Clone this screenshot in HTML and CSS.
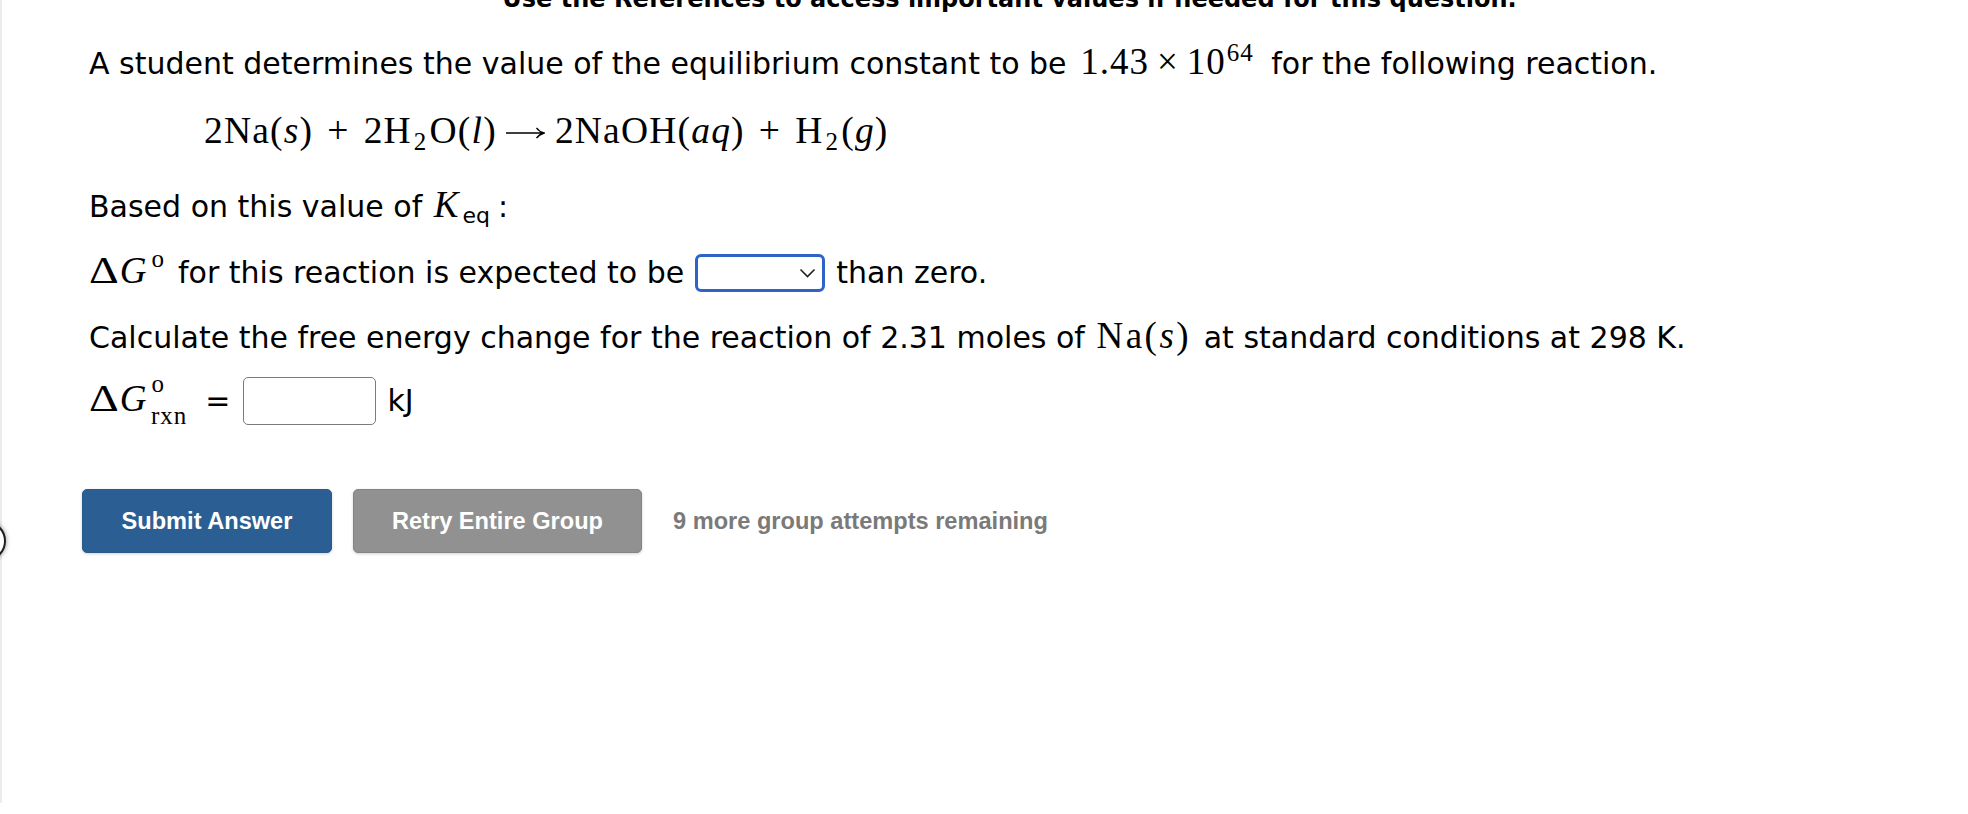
FILE: index.html
```html
<!DOCTYPE html>
<html lang="en">
<head>
<meta charset="utf-8">
<title>Equilibrium constant question</title>
<link rel="stylesheet" href="styles.css">
</head>
<body>
<div class="edge-knob"></div>
<div class="page">
  <div class="refs">Use the References to access important values if needed for this question.</div>
  <div class="question">
    <p class="line l1">A student determines the value of the equilibrium constant to be <span class="m m-k">1.43<span class="times">×</span>10<span class="sup sup-exp">64</span></span> for the following reaction.</p>
    <div class="eq">2Na(<i>s</i>)<span class="bin">+</span>2H<span class="sub sub-eq">2</span>O(<i>l</i>)<svg class="arrow" width="40" height="14" viewBox="0 0 40 14"><path d="M1 7H38.5M31.5 1.8Q34 5.6 39.2 7Q34 8.4 31.5 12.2" fill="none" stroke="#000" stroke-width="1.3"/></svg>2NaOH(<i>aq</i>)<span class="bin">+</span>H<span class="sub sub-eq">2</span>(<i>g</i>)</div>
    <p class="line l2">Based on this value of <span class="m"><i class="k">K</i><span class="sub sub-keq">eq</span></span><span class="colon">:</span></p>
    <div class="row l3">
      <span class="txt"><span class="m m-dg"><span class="delta">Δ</span><i>G</i><span class="sup sup-deg">o</span></span>for this reaction is expected to be</span>
      <div class="select">
        <svg class="chev" width="17" height="10" viewBox="0 0 17 10"><polyline points="1.5,1.5 8.5,8.5 15.5,1.5" fill="none" stroke="#222" stroke-width="1.6"/></svg>
      </div>
      <span class="txt">than zero.</span>
    </div>
    <p class="line l4">Calculate the free energy change for the reaction of 2.31 moles of <span class="m m-na">Na(<i>s</i>)</span> at standard conditions at 298 K.</p>
    <div class="row l5">
      <span class="txt"><span class="m"><span class="delta">Δ</span><i>G</i><span class="sup sup-rxn">o</span><span class="sub sub-rxn">rxn</span></span></span>
      <span class="txt eqsign">=</span>
      <div class="input"></div>
      <span class="txt unit">kJ</span>
    </div>
    <div class="actions">
      <button class="btn btn-primary">Submit Answer</button>
      <button class="btn btn-secondary">Retry Entire Group</button>
      <span class="remaining">9 more group attempts remaining</span>
    </div>
  </div>
</div>
</body>
</html>
```
FILE: styles.css
```css
html, body {
  margin: 0;
  padding: 0;
  background: #ffffff;
}
body {
  font-family: "DejaVu Sans", Verdana, sans-serif;
  color: #000000;
  overflow: hidden;
  height: 814px;
}
.page {
  border-left: 2px solid #ececec;
  height: 814px;
  box-sizing: border-box;
}
.refs {
  font-weight: bold;
  font-size: 24px;
  line-height: 20px;
  margin-top: -11px;
  text-align: center;
  padding-left: 49px;
  white-space: nowrap;
}
.question {
  padding-left: 87px;
}
.line {
  margin: 0;
  font-size: 30px;
  line-height: 40px;
  white-space: nowrap;
}
.m {
  font-family: "Liberation Serif", "Times New Roman", serif;
  font-size: 37px;
  line-height: 0;
  letter-spacing: 1px;
}
.m i, .eq i {
  font-style: italic;
}
.m-k {
  margin-left: 4px;
  margin-right: 8px;
}
.m-dg {
  margin-right: 13px;
}
.m-na {
  letter-spacing: 2.5px;
  margin-left: 2px;
  margin-right: 3px;
}
.delta {
  display: inline-block;
  transform: scaleX(1.25);
  transform-origin: left center;
  margin-right: 6px;
}
.sup, .sub {
  line-height: 0;
  font-size: 25px;
}
.sup-exp { vertical-align: 13px; margin-left: 1px; }
.sup-deg { vertical-align: 16px; margin-left: 4px; }
.sup-rxn { vertical-align: 19px; margin-left: 4px; }
.sub-rxn { vertical-align: -13px; margin-left: -14px; }
.sub-eq { vertical-align: -7px; margin-left: 2px; margin-right: 2px; }
.sub-keq {
  font-family: "DejaVu Sans", Verdana, sans-serif;
  font-size: 22px;
  letter-spacing: 0;
  vertical-align: -6px;
  margin-left: 3px;
}
.k { margin-left: 2px; }
.colon { margin-left: 8px; }
.times { margin: 0 8px; }
.l1 { margin-top: 35px; }
.eq {
  font-family: "Liberation Serif", "Times New Roman", serif;
  font-size: 37.5px;
  letter-spacing: 1.2px;
  line-height: 50px;
  margin-top: 22px;
  margin-left: 115px;
  white-space: nowrap;
}
.bin { margin: 0 14px; }
.arrow {
  vertical-align: 3px;
  margin: 0 10px 0 8px;
}
.l2 { margin-top: 31px; }
.row {
  display: flex;
  align-items: center;
  font-size: 30px;
  line-height: 40px;
  white-space: nowrap;
}
.l3 {
  margin-top: 26px;
  gap: 11px;
}
.select {
  width: 130px;
  height: 38px;
  box-sizing: border-box;
  border: 3px solid #2f63c8;
  border-radius: 6px;
  display: flex;
  align-items: center;
  justify-content: flex-end;
  padding-right: 6px;
  background: #ffffff;
}
.chev { display: block; }
.l4 { margin-top: 25px; }
.l5 {
  margin-top: 19px;
}
.eqsign { margin-left: 18px; }
.input {
  width: 133px;
  height: 48px;
  box-sizing: border-box;
  border: 1.5px solid #7b7b7b;
  border-radius: 5px;
  margin-left: 12px;
  background: #ffffff;
}
.unit { margin-left: 12px; }
.actions {
  margin-top: 64px;
  margin-left: -7px;
  display: flex;
  align-items: center;
}
.btn {
  font-family: "Liberation Sans", Arial, Helvetica, sans-serif;
  font-weight: bold;
  font-size: 23.6px;
  height: 64px;
  border-radius: 5px;
  color: #ffffff;
  padding: 0;
  white-space: nowrap;
  box-sizing: border-box;
  display: flex;
  align-items: center;
  justify-content: center;
  box-shadow: 0 1px 3px rgba(0, 0, 0, 0.18);
}
.btn-primary {
  background: #2b5f93;
  border: 1px solid #285a8c;
  width: 250px;
}
.btn-secondary {
  background: #919191;
  border: 1px solid #848484;
  width: 289px;
  margin-left: 21px;
}
.remaining {
  font-family: "Liberation Sans", Arial, Helvetica, sans-serif;
  font-weight: bold;
  font-size: 23.6px;
  color: #7a7a7a;
  margin-left: 31px;
  white-space: nowrap;
}
.edge-knob {
  position: absolute;
  left: -34px;
  top: 521px;
  width: 40px;
  height: 40px;
  box-sizing: border-box;
  border: 2.5px solid #1e1e1e;
  border-radius: 50%;
  background: #ffffff;
  box-shadow: 0 0 5px rgba(0, 0, 0, 0.45);
  z-index: 2;
}
```
